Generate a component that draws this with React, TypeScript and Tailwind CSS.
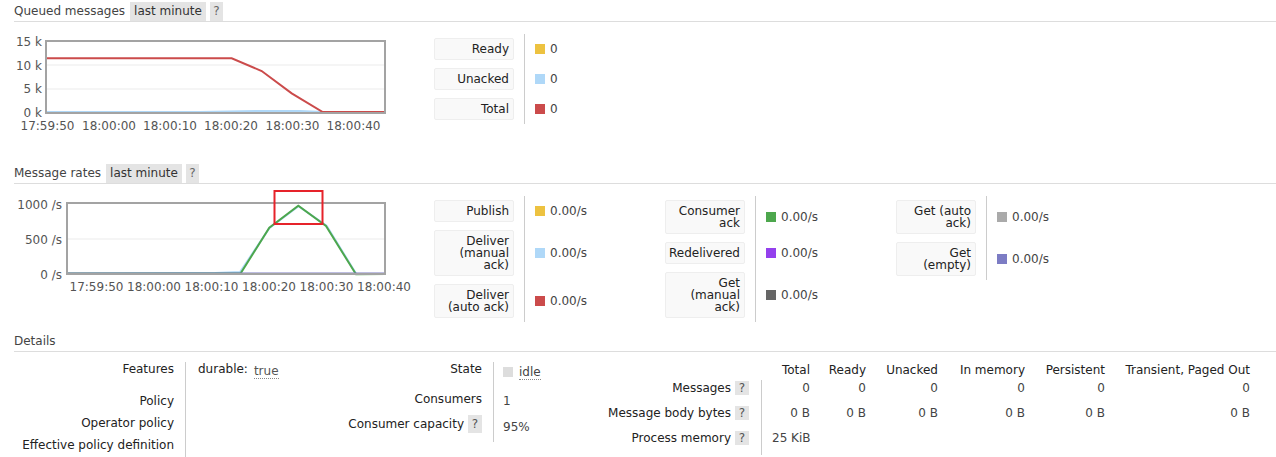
import React from 'react'

type LegendItem = { label: string[]; swatch: string; value: string }

const queued: LegendItem[] = [
  { label: ['Ready'], swatch: 'bg-[#edc240]', value: '0' },
  { label: ['Unacked'], swatch: 'bg-[#afd8f8]', value: '0' },
  { label: ['Total'], swatch: 'bg-[#cb4b4b]', value: '0' },
]

const ratesA: LegendItem[] = [
  { label: ['Publish'], swatch: 'bg-[#edc240]', value: '0.00/s' },
  { label: ['Deliver', '(manual', 'ack)'], swatch: 'bg-[#afd8f8]', value: '0.00/s' },
  { label: ['Deliver', '(auto ack)'], swatch: 'bg-[#cb4b4b]', value: '0.00/s' },
]

const ratesB: LegendItem[] = [
  { label: ['Consumer', 'ack'], swatch: 'bg-[#4da74d]', value: '0.00/s' },
  { label: ['Redelivered'], swatch: 'bg-[#9440ed]', value: '0.00/s' },
  { label: ['Get', '(manual', 'ack)'], swatch: 'bg-[#666666]', value: '0.00/s' },
]

const ratesC: LegendItem[] = [
  { label: ['Get (auto', 'ack)'], swatch: 'bg-[#aaaaaa]', value: '0.00/s' },
  { label: ['Get', '(empty)'], swatch: 'bg-[#7c7cc4]', value: '0.00/s' },
]

const SectionHeader = ({ title, range }: { title: string; range?: boolean }) => (
  <div className="flex h-[22px] items-end border-b border-[#ddd] text-[#444]">
    <span className="leading-[19px]">{title}</span>
    {range && (
      <>
        <span className="ml-[5px] h-[19px] bg-[#e4e4e4] px-[4px] leading-[19px] text-[#333]">last minute</span>
        <span className="ml-[4px] h-[19px] w-[13px] bg-[#e4e4e4] text-center leading-[19px] text-[#666]">?</span>
      </>
    )}
  </div>
)

const Help = ({ h }: { h: string }) => (
  <span className={`inline-block w-[14px] bg-[#e4e4e4] text-center text-[#555] ${h}`}>?</span>
)

const LegendColumn = ({ items }: { items: LegendItem[] }) => (
  <div className="flex w-[231px] shrink-0 flex-col">
    {items.map((it) => (
      <div key={it.label.join(' ')} className="flex">
        <div className="w-[90px] py-[4px] pr-[10px]">
          <div className="rounded-[2px] border border-[#eee] bg-[#f9f9f9] py-[4px] pr-[4px] text-right leading-[12px] text-[#222]">
            {it.label.map((l) => (
              <div key={l}>{l}</div>
            ))}
          </div>
        </div>
        <div className="flex w-[141px] items-center border-l border-[#ccc] pl-[10px] text-[#444]">
          <span className={`mr-[5px] h-[10px] w-[10px] ${it.swatch}`} />
          {it.value}
        </div>
      </div>
    ))}
  </div>
)

const axisFont = { fontFamily: 'DejaVu Sans, Verdana, sans-serif', fontSize: 12 }

const QueuedChart = () => (
  <svg width={406} height={140} viewBox="14 22 406 140" className="shrink-0">
    <line x1={46} y1={65} x2={385} y2={65} stroke="#ebebeb" />
    <line x1={46} y1={89} x2={385} y2={89} stroke="#ebebeb" />
    <polyline points="46,112 200,112 260,111 300,111 323,112 385,112" fill="none" stroke="#afd8f8" strokeWidth={2} />
    <polyline
      points="46,58.3 231.7,58.3 261.7,71 291.7,93.3 322.7,112 385,112"
      fill="none"
      stroke="#cb4b4b"
      strokeWidth={2}
    />
    <rect x={46} y={41} width={339} height={72} fill="none" stroke="#a3a3a3" strokeWidth={2} />
    <g style={axisFont} fill="#545454" textAnchor="end" dominantBaseline="central">
      <text x={42} y={42}>15 k</text>
      <text x={42} y={65.5}>10 k</text>
      <text x={42} y={89}>5 k</text>
      <text x={42} y={113}>0 k</text>
    </g>
    <g style={axisFont} fill="#545454" textAnchor="middle" dominantBaseline="central">
      {[
        ['17:59:50', 47.5],
        ['18:00:00', 109],
        ['18:00:10', 170],
        ['18:00:20', 231],
        ['18:00:30', 292.5],
        ['18:00:40', 353.5],
      ].map(([t, x]) => (
        <text key={t} x={x} y={126}>
          {t}
        </text>
      ))}
    </g>
  </svg>
)

const RatesChart = () => (
  <svg width={406} height={146} viewBox="14 184 406 146" className="shrink-0">
    <line x1={67} y1={239} x2={385} y2={239} stroke="#ebebeb" />
    <polyline
      points="67,274 215,273 240,272 269.5,228 298.5,206.3 326.6,225.6 356.3,274"
      fill="none"
      stroke="#afd8f8"
      strokeWidth={2}
    />
    <polyline
      points="67,273.5 240.7,273.3 269.3,227.7 298.3,205.7 326,226 356,274.3 386,274"
      fill="none"
      stroke="#4da74d"
      strokeWidth={2}
    />
    <line x1={67} y1={273.5} x2={385} y2={273.5} stroke="#7c7cc4" strokeWidth={2} />
    <rect x={67} y={203} width={318} height={71} fill="none" stroke="#a3a3a3" strokeWidth={2} />
    <g style={axisFont} fill="#545454" textAnchor="end" dominantBaseline="central">
      <text x={62} y={204.5}>1000 /s</text>
      <text x={62} y={239.5}>500 /s</text>
      <text x={62} y={274.5}>0 /s</text>
    </g>
    <g style={axisFont} fill="#545454" textAnchor="middle" dominantBaseline="central">
      {[
        ['17:59:50', 96.5],
        ['18:00:00', 154],
        ['18:00:10', 211.5],
        ['18:00:20', 269],
        ['18:00:30', 326.5],
        ['18:00:40', 384],
      ].map(([t, x]) => (
        <text key={t} x={x} y={286.5}>
          {t}
        </text>
      ))}
    </g>
    <rect x={274.5} y={191} width={48} height={33} fill="none" stroke="#e6232a" strokeWidth={2} />
  </svg>
)

const cols = ['Total', 'Ready', 'Unacked', 'In memory', 'Persistent', 'Transient, Paged Out']

export default function App() {
  return (
    <div className="min-h-[457px] bg-white pl-[14px] font-['DejaVu_Sans',Verdana,sans-serif] text-[12px] text-[#222]">
      <SectionHeader title="Queued messages" range />
      <div className="flex h-[140px]">
        <QueuedChart />
        <div className="ml-[14px] mt-[12px] flex items-start">
          <LegendColumn items={queued} />
        </div>
      </div>

      <SectionHeader title="Message rates" range />
      <div className="flex h-[146px]">
        <RatesChart />
        <div className="ml-[14px] mt-[12px] flex items-start">
          <LegendColumn items={ratesA} />
          <LegendColumn items={ratesB} />
          <LegendColumn items={ratesC} />
        </div>
      </div>

      <SectionHeader title="Details" />
      <div className="mt-[10px] flex items-start leading-[14px]">
        {/* features / policies */}
        <div className="grid w-[286px] shrink-0 grid-cols-[171px_115px] grid-rows-[32px_22px_22px_22px]">
          <div className="pr-[11px] text-right">Features</div>
          <div className="flex items-start border-l border-[#ccc] pl-[12px]">
            <span>durable:</span>
            <span className="ml-[6px] mt-[2px] border-b border-dotted border-[#888] text-[#555]">true</span>
          </div>
          <div className="pr-[11px] text-right">Policy</div>
          <div className="border-l border-[#ccc]" />
          <div className="pr-[11px] text-right">Operator policy</div>
          <div className="border-l border-[#ccc]" />
          <div className="whitespace-nowrap pr-[11px] text-right">Effective policy definition</div>
          <div className="border-l border-[#ccc]" />
        </div>

        {/* state / consumers */}
        <div className="grid w-[260px] shrink-0 grid-cols-[193px_67px] grid-rows-[30px_22px_28px]">
          <div className="pr-[11px] text-right">State</div>
          <div className="flex items-start border-l border-[#ccc] pl-[9px] pt-[3px] text-[#444]">
            <span className="mt-[2px] h-[10px] w-[10px] bg-[#ddd]" />
            <span className="ml-[6px] border-b border-dotted border-[#888]">idle</span>
          </div>
          <div className="pr-[11px] text-right">Consumers</div>
          <div className="border-l border-[#ccc] pl-[9px] pt-[2px] text-[#444]">1</div>
          <div className="flex items-start justify-end gap-[4px] pr-[11px] pt-[1px]">
            <span className="mt-[2px]">Consumer capacity</span>
            <Help h="h-[18px] leading-[18px]" />
          </div>
          <div className="border-l border-[#ccc] pl-[9px] pt-[6px] text-[#444]">95%</div>
        </div>

        {/* message counts */}
        <div className="grid shrink-0 grid-cols-[201px_49px_56px_72px_87px_80px_145px] grid-rows-[18px_25px_25px_25px]">
          <div />
          {cols.map((c) => (
            <div key={c} className="whitespace-nowrap text-right leading-[16px]">
              {c}
            </div>
          ))}

          <div className="flex items-center justify-end gap-[4px] self-start pr-[12px] pt-[1px]">
            <span>Messages</span>
            <Help h="h-[14px] leading-[14px]" />
          </div>
          {cols.map((c, i) => (
            <div key={c} className={`pt-[1px] text-right text-[#444] ${i === 0 ? 'border-l border-[#ccc]' : ''}`}>
              0
            </div>
          ))}

          <div className="flex items-center justify-end gap-[4px] self-start pr-[12px] pt-[1px]">
            <span className="whitespace-nowrap">Message body bytes</span>
            <Help h="h-[14px] leading-[14px]" />
          </div>
          {cols.map((c, i) => (
            <div key={c} className={`pt-[1px] text-right text-[#444] ${i === 0 ? 'border-l border-[#ccc]' : ''}`}>
              0 B
            </div>
          ))}

          <div className="flex items-center justify-end gap-[4px] self-start pr-[12px] pt-[1px]">
            <span>Process memory</span>
            <Help h="h-[14px] leading-[14px]" />
          </div>
          <div className="whitespace-nowrap border-l border-[#ccc] pl-[10px] pt-[1px] text-[#444]">25 KiB</div>
          <div />
          <div />
          <div />
          <div />
          <div />
        </div>
      </div>
    </div>
  )
}
